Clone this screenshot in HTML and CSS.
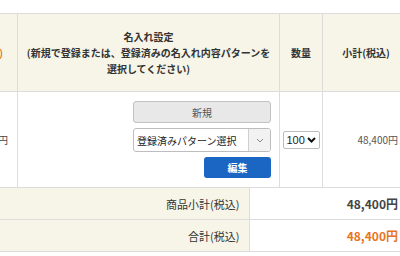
FILE: index.html
```html
<!DOCTYPE html>
<html lang="ja">
<head>
<meta charset="utf-8">
<link rel="stylesheet" href="styles.css">
</head>
<body>
<div class="wrap">
  <table class="cart">
    <colgroup>
      <col class="c-price"><col class="c-name"><col class="c-qty"><col class="c-sub">
    </colgroup>
    <thead>
      <tr class="head">
        <th class="price-h">単価(税込)</th>
        <th>名入れ設定<br>(新規で登録または、登録済みの名入れ内容パターンを<br>選択してください)</th>
        <th>数量</th>
        <th>小計(税込)</th>
      </tr>
    </thead>
    <tbody>
      <tr class="item">
        <td class="price">48,400円</td>
        <td class="name">
          <div class="ctrls">
            <div class="btn-new">新規</div>
            <div class="sel">
              <span class="sel-text">登録済みパターン選択</span>
              <span class="sel-arrow"><svg width="8" height="5" viewBox="0 0 8 5"><path d="M1 1l3 3 3-3" fill="none" stroke="#888" stroke-width="1"/></svg></span>
            </div>
            <div class="btn-edit">編集</div>
          </div>
        </td>
        <td class="qty">
          <div class="qsel"><span>100</span><svg width="9" height="6" viewBox="0 0 9 6"><path d="M1 1l3.5 3.5L8 1" fill="none" stroke="#111" stroke-width="2"/></svg></div>
        </td>
        <td class="sub">48,400円</td>
      </tr>
    </tbody>
  </table>
  <table class="sum">
    <colgroup><col class="s-label"><col class="s-val"></colgroup>
    <tr>
      <th>商品小計(税込)</th>
      <td>48,400円</td>
    </tr>
    <tr>
      <th>合計(税込)</th>
      <td class="total">48,400円</td>
    </tr>
  </table>
</div>
</body>
</html>
```

FILE: styles.css
```css
html, body {
  margin: 0;
  padding: 0;
  background: #fff;
  overflow: hidden;
}
body {
  font-family: "Noto Sans CJK JP", "Noto Sans", sans-serif;
  color: #333;
}
.wrap {
  width: 472px;
  margin-left: -63px;
  padding-top: 13px;
}
table {
  border-collapse: collapse;
  table-layout: fixed;
  width: 472px;
}
.c-price { width: 80px; }
.c-name { width: 262px; }
.c-qty { width: 43px; }
.c-sub { width: 87px; }

.cart th, .cart td {
  border: 1px solid #dcdcdc;
  padding: 0;
}
.cart .head th {
  background: #f7f5e8;
  font-size: 10px;
  font-weight: bold;
  line-height: 16px;
  color: #333;
  height: 77px;
  text-align: center;
  vertical-align: middle;
}
.cart .head th.price-h {
  text-align: right;
  padding-right: 14px;
  color: #e8741e;
}
.item td {
  height: 95px;
  vertical-align: middle;
  font-size: 10px;
}
.item .price {
  text-align: right;
  padding-right: 9px;
  color: #444;
}
.ctrls {
  display: flex;
  flex-direction: column;
  align-items: flex-end;
  gap: 5px;
  padding-right: 8px;
}
.btn-new {
  box-sizing: border-box;
  width: 138px;
  height: 22px;
  background: #e8e8e8;
  border: 1px solid #c2c2c2;
  border-radius: 3px;
  color: #555;
  font-size: 10px;
  display: flex;
  align-items: center;
  justify-content: center;
}
.sel {
  box-sizing: border-box;
  width: 138px;
  height: 24px;
  border: 1px solid #bdbdbd;
  border-radius: 3px;
  background: #fff;
  display: flex;
  align-items: stretch;
  overflow: hidden;
}
.sel-text {
  flex: 1;
  display: flex;
  align-items: center;
  padding-left: 3px;
  font-size: 10px;
  color: #222;
}
.sel-arrow {
  width: 21px;
  border-left: 1px solid #d0d0d0;
  background: #f2f2f2;
  display: flex;
  align-items: center;
  justify-content: center;
}
.btn-edit {
  box-sizing: border-box;
  width: 67px;
  height: 21px;
  background: #1a66c2;
  border-radius: 3px;
  color: #fff;
  font-weight: bold;
  font-size: 10px;
  display: flex;
  align-items: center;
  justify-content: center;
}
.item .qty {
  text-align: center;
}
.qsel {
  box-sizing: border-box;
  display: inline-flex;
  align-items: center;
  gap: 2px;
  width: 37px;
  height: 18px;
  border: 1px solid #bdbdbd;
  border-radius: 2px;
  padding-left: 3px;
  font-size: 11px;
  color: #222;
  font-family: "Liberation Sans", "Noto Sans", sans-serif;
  vertical-align: middle;
}
.item .sub {
  text-align: right;
  padding-right: 11px;
  color: #555;
}

.s-label { width: 312px; }
.s-val { width: 160px; }
.sum th, .sum td {
  border-bottom: 1px solid #dcdcdc;
  padding: 0;
  height: 31px;
  vertical-align: middle;
}
.sum th {
  background: #f7f5e8;
  text-align: right;
  padding-right: 9px;
  font-size: 11px;
  font-weight: normal;
  color: #333;
  border-right: 1px solid #dcdcdc;
}
.sum td {
  text-align: right;
  padding-right: 11px;
  font-size: 12px;
  font-weight: bold;
  color: #444;
}
.sum td.total {
  color: #e8741e;
}
```
